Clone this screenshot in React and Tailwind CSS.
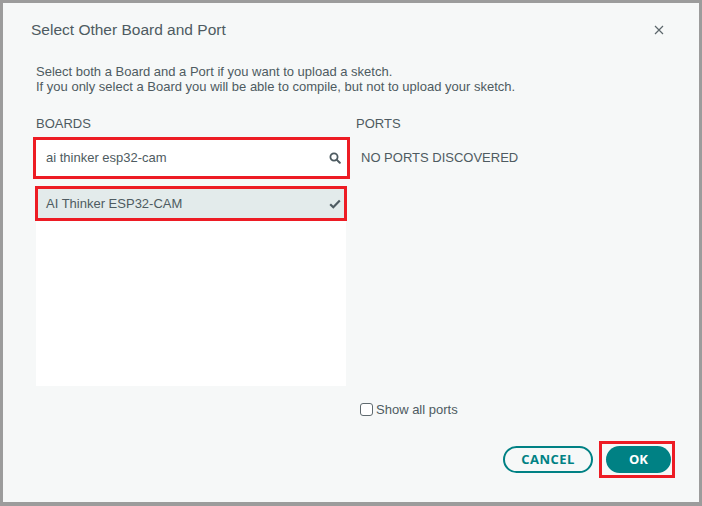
import React from "react";

const font = { fontFamily: '"Liberation Sans", Arial, sans-serif' };

export default function App() {
  return (
    <div className="w-[702px] h-[506px] bg-[#9c9c9c] pt-[3px] pl-[3px] pr-[3px] pb-[4px]" style={font}>
      <div className="w-full h-full bg-[#f6f8f8] flex flex-col text-[#4e5b61] font-['Liberation_Sans',Arial,sans-serif]">
        {/* header */}
        <div className="flex items-center justify-between pl-[28px] pr-[35px] pt-[14px] h-[40px]">
          <div className="text-[15.5px] leading-[20px]">Select Other Board and Port</div>
          <svg width="10" height="10" viewBox="0 0 10 10" className="text-[#5c676c]">
            <path d="M1 1 L9 9 M9 1 L1 9" stroke="currentColor" strokeWidth="1.2" fill="none" />
          </svg>
        </div>
        {/* description */}
        <div className="pl-[33px] mt-[21px] text-[13px] leading-[15px]">
          <div>Select both a Board and a Port if you want to upload a sketch.</div>
          <div>If you only select a Board you will be able to compile, but not to upload your sketch.</div>
        </div>
        {/* columns */}
        <div className="flex pl-[33px] mt-[22px]">
          <div className="w-[310px] flex flex-col">
            <div className="text-[13px] leading-[15px] uppercase">Boards</div>
            <div className="-ml-[3px] mt-[6px] w-[317px] h-[42px] border-[3px] border-[#ed1c24] bg-white flex items-center justify-between pl-[10px] pr-[6px]">
              <span className="text-[13px]">ai thinker esp32-cam</span>
              <svg width="12" height="12" viewBox="0 0 12 12">
                <circle cx="5" cy="5" r="3.6" stroke="#4e5b61" strokeWidth="1.8" fill="none" />
                <path d="M7.6 7.6 L10.8 10.8" stroke="#4e5b61" strokeWidth="2" strokeLinecap="round" />
              </svg>
            </div>
            <div className="mt-[7px] bg-white h-[200px] flex flex-col">
              <div className="-ml-[1px] w-[312px] h-[35px] border-[3px] border-[#ed1c24] bg-[#e3ebeb] flex items-center justify-between pl-[8px] pr-[3px]">
                <span className="text-[13px]">AI Thinker ESP32-CAM</span>
                <svg width="12" height="10" viewBox="0 0 12 10">
                  <path d="M1.2 5.2 L4.3 8.2 L10.8 1.6" stroke="#4e5b61" strokeWidth="2.2" fill="none" />
                </svg>
              </div>
            </div>
          </div>
          <div className="ml-[10px] flex-1 flex flex-col">
            <div className="text-[13px] leading-[15px] uppercase">Ports</div>
            <div className="mt-[19px] pl-[5px] text-[13px] leading-[15px] uppercase">No ports discovered</div>
          </div>
        </div>
        {/* show all ports */}
        <div className="flex items-center pl-[357px] mt-[16px]">
          <span className="w-[13px] h-[13px] border border-[#5f6a6f] rounded-[3px] bg-white"></span>
          <span className="ml-[3px] text-[13px] leading-[15px]">Show all ports</span>
        </div>
        {/* buttons */}
        <div className="flex justify-end items-center pr-[24px] mt-[24px]">
          <button className="w-[90px] h-[27px] rounded-full border-2 border-[#008184] text-[#008184] text-[13px] font-bold tracking-[0.5px] font-['Open_Sans',sans-serif] flex items-center justify-center bg-transparent">
            CANCEL
          </button>
          <div className="ml-[6px] border-[3px] border-[#ed1c24] pt-[2px] pb-[2px] pl-[4px] pr-[1px]">
            <button className="w-[65px] h-[27px] rounded-full bg-[#008184] text-white text-[13px] font-bold font-['Open_Sans',sans-serif] flex items-center justify-center">
              OK
            </button>
          </div>
        </div>
      </div>
    </div>
  );
}
